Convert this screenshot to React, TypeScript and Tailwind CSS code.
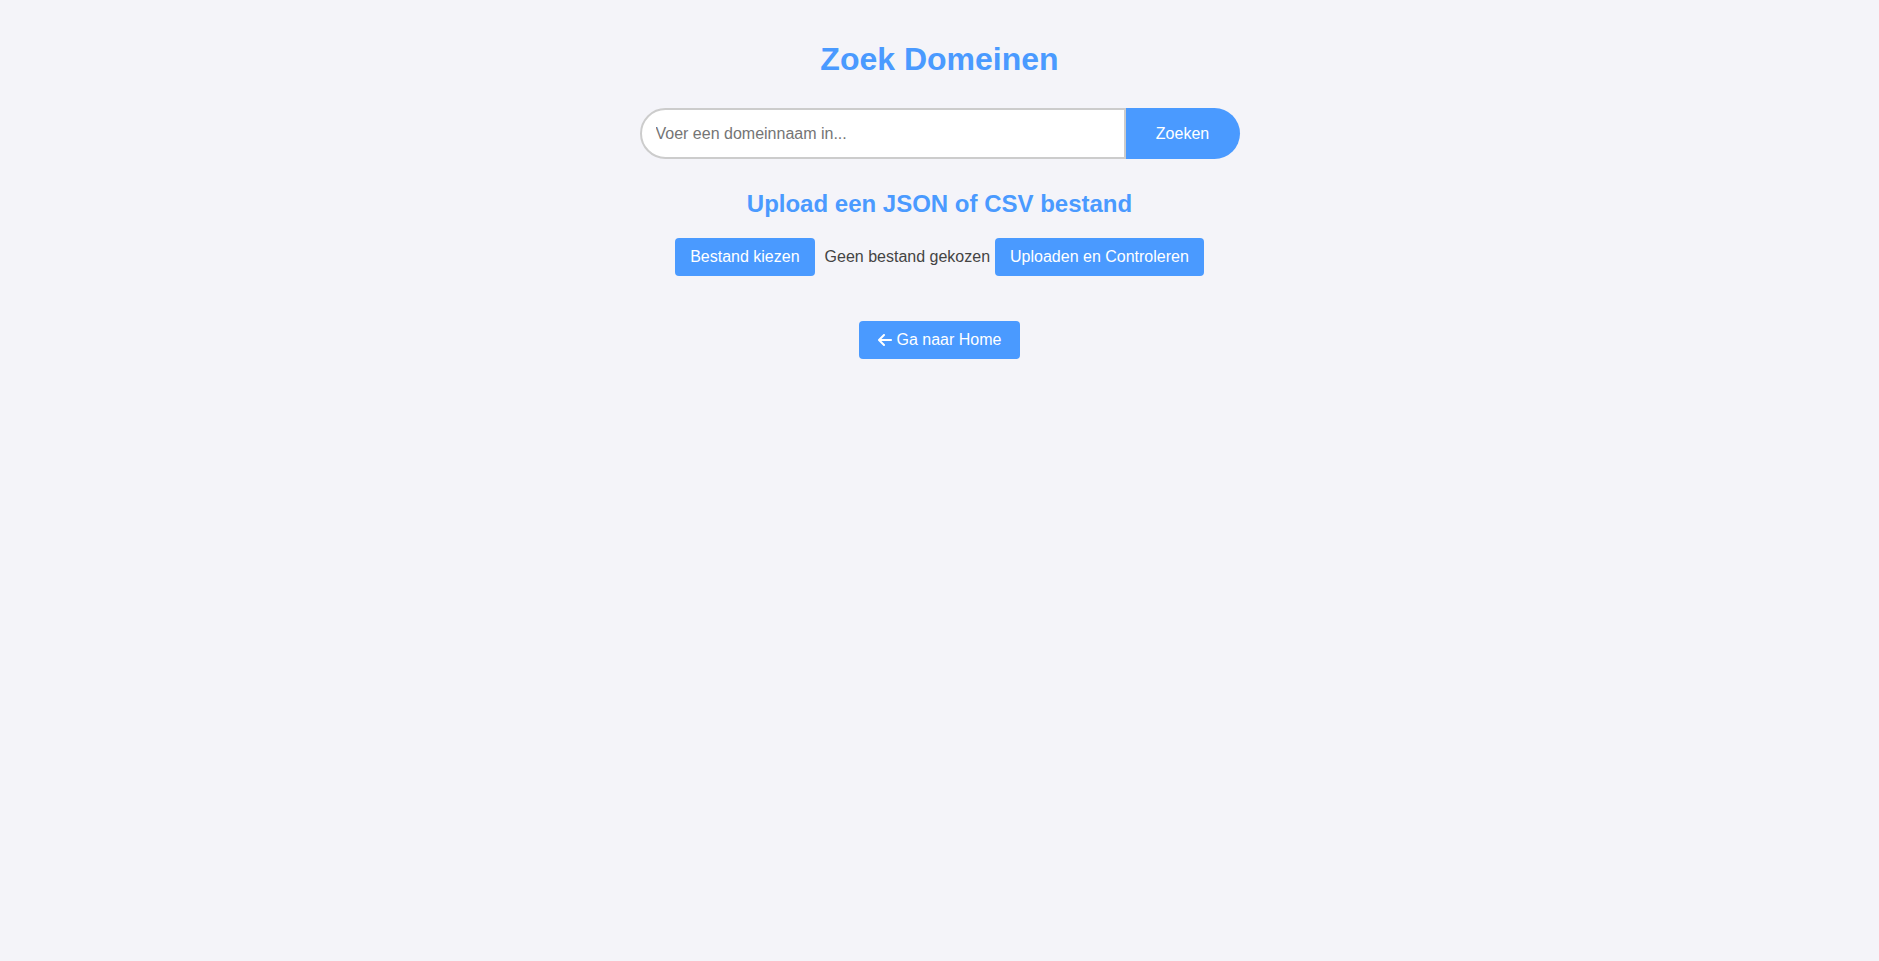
import React, { useState } from "react";

const ArrowLeft = () => (
  <svg viewBox="0 0 448 512" className="w-[14px] h-[16px] fill-current" aria-hidden="true">
    <path d="M9.4 233.4c-12.5 12.5-12.5 32.8 0 45.3l160 160c12.5 12.5 32.8 12.5 45.3 0s12.5-32.8 0-45.3L109.2 288 416 288c17.7 0 32-14.3 32-32s-14.3-32-32-32l-306.7 0L214.6 118.6c12.5-12.5 12.5-32.8 0-45.3s-32.8-12.5-45.3 0l-160 160z" />
  </svg>
);

export default function App() {
  const [query, setQuery] = useState("");
  const [fileName, setFileName] = useState<string>();

  return (
    <div className="min-h-screen bg-[#f4f4f9] pt-5 font-['Liberation_Sans',Arial,sans-serif] text-[16px] text-[#333]">
      <div className="flex flex-col items-center">
        <h1 className="mt-[21px] text-[32px] leading-[37px] font-bold text-[#4a9aff]">
          Zoek Domeinen
        </h1>

        {/* search */}
        <form
          className="mt-[30px] flex w-[600px]"
          onSubmit={(e) => e.preventDefault()}
        >
          <input
            type="text"
            value={query}
            onChange={(e) => setQuery(e.target.value)}
            placeholder="Voer een domeinnaam in..."
            className="h-[51px] w-[486px] rounded-l-[26px] border-2 border-[#ccc] bg-white px-[14px] text-[16px] text-[#333] outline-none placeholder:text-[#757575]"
          />
          <button
            type="submit"
            className="h-[51px] w-[114px] rounded-r-[26px] bg-[#4a9aff] text-[16px] text-white"
          >
            Zoeken
          </button>
        </form>

        {/* upload */}
        <h2 className="mt-[31px] text-[24px] leading-[28px] font-bold text-[#4a9aff]">
          Upload een JSON of CSV bestand
        </h2>
        <div className="mt-[20px] flex items-center">
          <label className="cursor-pointer rounded-[4px] bg-[#4a9aff] px-[15px] py-[10px] leading-[18px] text-white">
            Bestand kiezen
            <input
              type="file"
              accept=".json,.csv"
              className="hidden"
              onChange={(e) => setFileName(e.target.files?.[0]?.name)}
            />
          </label>
          <span className="ml-[10px] text-[#444]">{fileName ?? "Geen bestand gekozen"}</span>
          <button className="ml-[5px] rounded-[4px] bg-[#4a9aff] px-[15px] py-[10px] leading-[18px] text-white">
            Uploaden en Controleren
          </button>
        </div>

        <a
          href="#"
          className="mt-[45px] flex items-center gap-[5px] rounded-[4px] bg-[#4a9aff] px-[19px] py-[10px] leading-[18px] text-white"
        >
          <ArrowLeft />
          Ga naar Home
        </a>
      </div>
    </div>
  );
}
